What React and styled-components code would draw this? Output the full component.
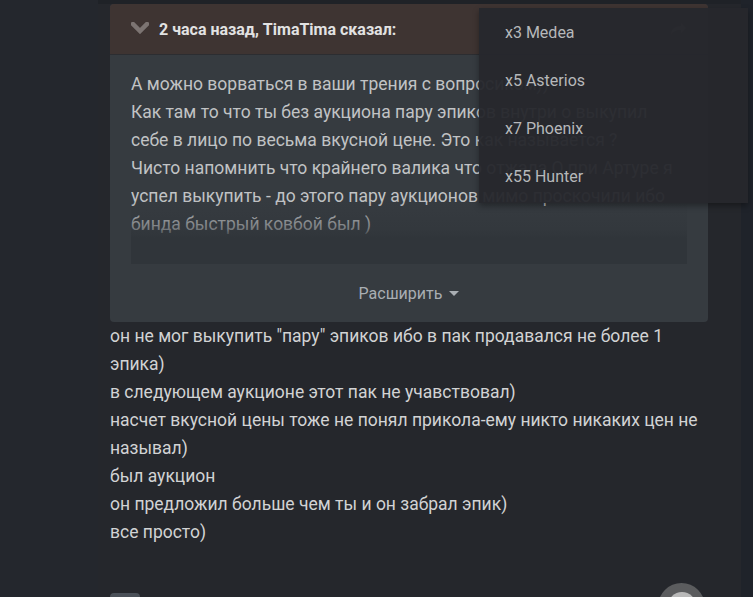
import React from "react";
import styled, { createGlobalStyle } from "styled-components";

const GlobalStyle = createGlobalStyle`
  html, body {
    margin: 0;
    padding: 0;
    background: #24272d;
    overflow: hidden;
  }
  body {
    font-family: Roboto, "Liberation Sans", sans-serif;
  }
`;

const quoteLines = [
  "А можно ворваться в ваши трения с вопросиком))",
  "Как там то что ты без аукциона пару эпиков внутри о выкупил",
  "себе в лицо по весьма вкусной цене. Это как называется ?",
  "Чисто напомнить что крайнего валика что отжала О при Артуре я",
  "успел выкупить - до этого пару аукционов мимо проскочили ибо",
  "бинда быстрый ковбой был )",
];

const replyLines = [
  'он не мог выкупить "пару" эпиков ибо в пак продавался не более 1',
  "эпика)",
  "в следующем аукционе этот пак не учавствовал)",
  "насчет вкусной цены тоже не понял прикола-ему никто никаких цен не",
  "называл)",
  "был аукцион",
  "он предложил больше чем ты и он забрал эпик)",
  "все просто)",
];

const servers = ["x3 Medea", "x5 Asterios", "x7 Phoenix", "x55 Hunter"];

const App = () => {
  return (
    <>
      <GlobalStyle />
      <Page>
        <SideGutter />
        <PostColumn>
          <Quote>
            <QuoteHeader>
              <Chevron width="18" height="12" viewBox="0 0 18 12">
                <polyline points="2,2 9,9 16,2" />
              </Chevron>
              <QuoteTitle>2 часа назад, TimaTima сказал:</QuoteTitle>
              <JumpIcon width="18" height="16" viewBox="0 0 18 16">
                <path d="M2 14 C2 8 6 5 12 5 L12 1.5 L17 7 L12 12.5 L12 9 C7 9 4 10.5 2 14 Z" />
              </JumpIcon>
            </QuoteHeader>
            <QuoteBody>
              <QuoteContent>
                {quoteLines.map((line) => (
                  <Line key={line}>{line}</Line>
                ))}
              </QuoteContent>
              <ExpandLink>
                Расширить <Caret />
              </ExpandLink>
            </QuoteBody>
          </Quote>
          <ReplyText>
            {replyLines.map((line) => (
              <Line key={line}>{line}</Line>
            ))}
          </ReplyText>
          <PostFooter>
            <SmallButton />
            <Avatar>
              <AvatarHead />
            </Avatar>
          </PostFooter>
        </PostColumn>
        <RightEdge />
      </Page>
      <ServerMenu>
        {servers.map((name) => (
          <MenuItem key={name}>{name}</MenuItem>
        ))}
      </ServerMenu>
    </>
  );
};

export default App;

const Page = styled.div`
  display: flex;
  width: 753px;
  height: 597px;
  overflow: hidden;
`;

const SideGutter = styled.div`
  width: 98px;
  flex-shrink: 0;
  background: #24272d;
`;

const PostColumn = styled.div`
  flex: 1;
  display: flex;
  flex-direction: column;
  background: #25272c;
  border-top: 4px solid #1f2227;
  padding: 0 33px 0 12px;

  & > * {
    flex-shrink: 0;
  }
`;

const RightEdge = styled.div`
  width: 12px;
  flex-shrink: 0;
  background: #1f232a;
`;

const Quote = styled.div`
  width: 598px;
  border-radius: 4px;
  overflow: hidden;
  background: #363b40;
`;

const QuoteHeader = styled.div`
  display: flex;
  align-items: center;
  height: 50px;
  padding: 0 21px;
  background: #3e3432;
  border-bottom: 1px solid #2c2d31;
`;

const Chevron = styled.svg`
  flex-shrink: 0;
  margin-right: 10px;
  margin-top: -3px;
  fill: none;
  stroke: #7c7472;
  stroke-width: 4.5;
  stroke-linecap: square;
`;

const QuoteTitle = styled.span`
  flex: 1;
  font-size: 16px;
  font-weight: 700;
  color: #e2e2e2;
`;

const JumpIcon = styled.svg`
  fill: #6b6462;
`;

const QuoteBody = styled.div`
  padding: 15px 21px 0;
`;

const QuoteContent = styled.div`
  position: relative;
  height: 194px;
  overflow: hidden;
  font-size: 17.5px;
  line-height: 28px;
  color: #c1c3c5;

  &::after {
    content: "";
    position: absolute;
    left: 0;
    right: 0;
    bottom: 0;
    height: 64px;
    background: linear-gradient(
      to bottom,
      rgba(48, 53, 58, 0) 0%,
      rgba(48, 53, 58, 0.5) 45%,
      #30353a 60%,
      #30353a 100%
    );
  }
`;

const Line = styled.div`
  white-space: nowrap;
`;

const ExpandLink = styled.div`
  display: flex;
  align-items: center;
  justify-content: center;
  gap: 7px;
  height: 58px;
  font-size: 16px;
  color: #a9aeb3;
`;

const Caret = styled.span`
  width: 0;
  height: 0;
  border-left: 5px solid transparent;
  border-right: 5px solid transparent;
  border-top: 5px solid #a9aeb3;
  margin-top: 1px;
`;

const ReplyText = styled.div`
  font-size: 17.5px;
  line-height: 28px;
  color: #d2d3d4;
`;

const PostFooter = styled.div`
  display: flex;
  justify-content: space-between;
  align-items: flex-start;
  margin-top: 37px;
  padding-right: 3px;
`;

const SmallButton = styled.div`
  width: 30px;
  height: 20px;
  margin-top: 10px;
  border-radius: 4px;
  background: #4a5058;
`;

const Avatar = styled.div`
  display: flex;
  justify-content: center;
  width: 47px;
  height: 47px;
  border-radius: 50%;
  background: #5b5c5e;
`;

const AvatarHead = styled.div`
  width: 28px;
  height: 28px;
  margin-top: 9px;
  border-radius: 50%;
  background: #b9b9b9;
`;

const ServerMenu = styled.div`
  position: absolute;
  top: 8px;
  left: 479px;
  width: 269px;
  padding-bottom: 3px;
  background: rgba(38, 40, 45, 0.96);
  box-shadow: 0 3px 6px rgba(0, 0, 0, 0.35);
`;

const MenuItem = styled.div`
  height: 48px;
  line-height: 49px;
  padding-left: 26px;
  font-size: 16px;
  color: #b6b8ba;
`;
